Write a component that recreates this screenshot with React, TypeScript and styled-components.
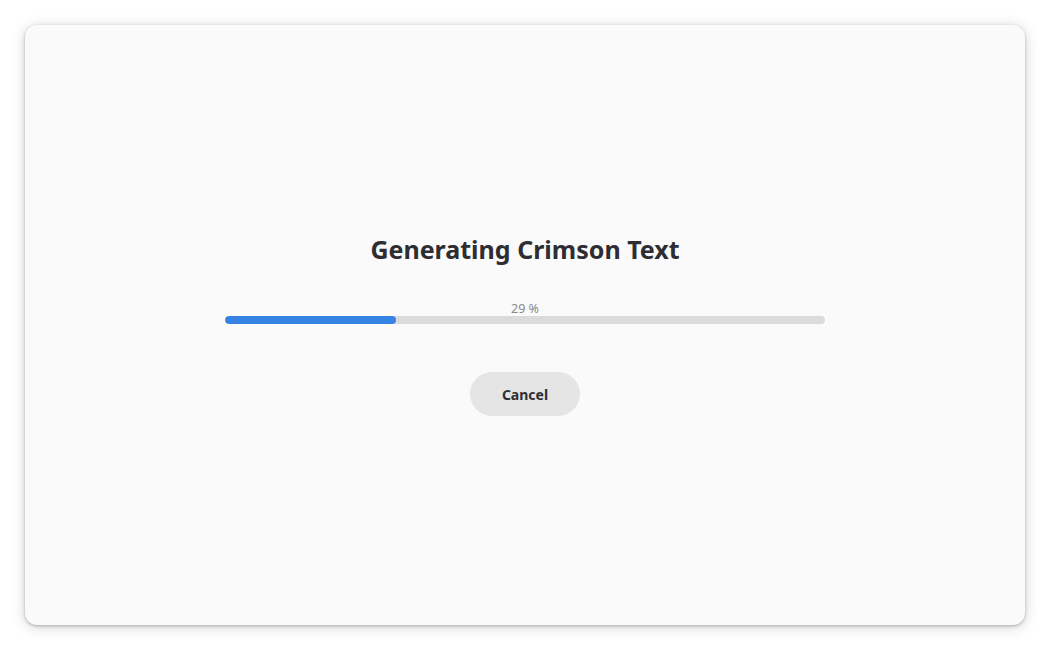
import React from "react";
import styled, { createGlobalStyle } from "styled-components";

const Global = createGlobalStyle`
  html, body { margin: 0; padding: 0; background: #ffffff; }
  body { font-family: "Noto Sans", "DejaVu Sans", sans-serif; }
`;

const Page = styled.div`
  width: 1050px;
  height: 650px;
  display: flex;
  align-items: center;
  justify-content: center;
`;

const Window = styled.div`
  width: 1000px;
  height: 600px;
  background: #fafafa;
  border-radius: 12px;
  box-shadow: 0 1px 3px rgba(0, 0, 0, 0.25), 0 2px 14px rgba(0, 0, 0, 0.18);
  display: flex;
  flex-direction: column;
  align-items: center;
  justify-content: center;
`;

const Content = styled.div`
  width: 600px;
  display: flex;
  flex-direction: column;
  align-items: center;
`;

const Title = styled.h1`
  margin: 0;
  font-family: "Noto Sans", sans-serif;
  font-weight: 700;
  font-size: 25px;
  line-height: 30px;
  color: #2e2e32;
  letter-spacing: 0;
`;

const ProgressBlock = styled.div`
  width: 600px;
  margin-top: 38px;
  display: flex;
  flex-direction: column;
  align-items: center;
`;

const Label = styled.div`
  font-family: "Noto Sans", sans-serif;
  font-size: 12.5px;
  line-height: 14px;
  color: #8a8a8a;
  margin-bottom: 0;
`;

const Track = styled.div`
  width: 100%;
  height: 8px;
  border-radius: 4px;
  background: #dbdbdb;
  overflow: hidden;
`;

const Fill = styled.div`
  height: 100%;
  border-radius: 4px;
  background: #3584e4;
`;

const Button = styled.button`
  margin-top: 48px;
  width: 110px;
  height: 44px;
  border: none;
  border-radius: 22px;
  background: #e5e5e5;
  color: #2e2e32;
  font-family: "Noto Sans", sans-serif;
  font-weight: 700;
  font-size: 14px;
  cursor: pointer;
`;

export default function App() {
  const progress = 0.285;
  return (
    <>
      <Global />
      <Page>
        <Window>
          <Content>
            <Title>Generating Crimson Text</Title>
            <ProgressBlock>
              <Label>29 %</Label>
              <Track>
                <Fill style={{ width: `${progress * 100}%` }} />
              </Track>
            </ProgressBlock>
            <Button>Cancel</Button>
          </Content>
        </Window>
      </Page>
    </>
  );
}
